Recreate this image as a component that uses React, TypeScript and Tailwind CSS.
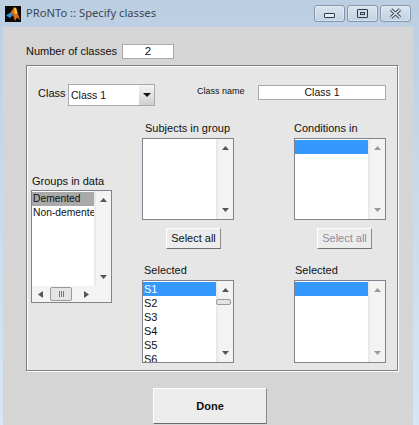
import React from "react";

const font = { fontFamily: '"Liberation Sans", Arial, sans-serif' };

function Up({ c = "#6f6f6f" }: { c?: string }) {
  return <svg width="7" height="4" viewBox="0 0 7 4" className="block"><path d="M3.5 0 L7 4 H0 Z" fill={c} /></svg>;
}
function Down({ c = "#6f6f6f" }: { c?: string }) {
  return <svg width="7" height="4" viewBox="0 0 7 4" className="block"><path d="M0 0 H7 L3.5 4 Z" fill={c} /></svg>;
}

function VScroll({ thumb, light }: { thumb?: boolean; light?: boolean }) {
  const c = light ? "#9a9a9a" : "#555555";
  return (
    <div className="w-[17px] shrink-0 bg-[#f3f3f3] border-l-2 border-l-[#e9e9e9] flex flex-col items-center justify-between py-[7px] relative">
      <Up c={c} />
      {thumb && <div className="absolute top-[18px] -left-[2px] w-[15px] h-[6px] rounded-[2px] border border-[#9a9a9a] bg-[#e4e4e4]" />}
      <Down c={c} />
    </div>
  );
}

function ListBox({ items = [], selected, h, w, thumb, light }: { items?: string[]; selected?: boolean; h: string; w: string; thumb?: boolean; light?: boolean }) {
  return (
    <div className={`flex border border-[#82828f] bg-white overflow-hidden ${h} ${w}`}>
      <div className="flex-1 overflow-hidden pt-px">
        {items.length === 0 && selected && <div className="h-[14px] bg-[#3399ff]" />}
        {items.map((t, i) => (
          <div key={t} className={`h-[14px] leading-[14px] pl-px text-[11px] whitespace-nowrap ${i === 0 && selected ? "bg-[#3399ff] text-white" : ""}`}>{t}</div>
        ))}
      </div>
      <VScroll thumb={thumb} light={light} />
    </div>
  );
}

function SelectAll({ disabled }: { disabled?: boolean }) {
  return (
    <button className={`block w-[55px] h-[21px] text-[11px] bg-[#ececec] border border-t-white border-l-white border-r-[#8a8a8a] border-b-[#707070] ${disabled ? "text-[#8c8c9c]" : "text-[#111]"}`}>
      Select all
    </button>
  );
}

function WinBtn({ children, w }: { children: React.ReactNode; w: string }) {
  return (
    <div className={`${w} h-[17px] rounded-[3px] border border-[#8496ad] bg-gradient-to-b from-[#d9e4ef] to-[#c2d2e2] flex items-center justify-center shadow-[inset_0_0_0_1px_rgba(255,255,255,0.35)]`}>
      {children}
    </div>
  );
}

export default function App() {
  return (
    <div style={font} className="w-[419px] h-[425px] overflow-hidden flex flex-col bg-gradient-to-b from-[#bccfe2] to-[#d6e6f6] text-[#111]">
      <div className="h-[27px] shrink-0 flex items-center pl-[5px] pr-[8px]">
        <svg width="16" height="16" viewBox="0 0 16 16" className="shrink-0">
          <rect width="16" height="16" fill="#0a0a0a" />
          <path d="M1 9.5 L5.5 6.5 L8 9 L5 12 Z" fill="#2f8fd8" />
          <path d="M5.5 6.5 L9 1.5 L11 2 L15 14 L12 11.5 L10 15 L8 9 Z" fill="#e06a18" />
          <path d="M9 1.5 L11 2 L12.5 7 L9.5 8 Z" fill="#f7c23e" />
        </svg>
        <span style={{ fontFamily: '"Noto Sans", sans-serif' }} className="ml-[5px] text-[11.2px] text-[#3c4654]">PRoNTo :: Specify classes</span>
        <div className="ml-auto flex gap-[2px]">
          <WinBtn w="w-[31px]"><div className="w-[11px] h-[5px] mt-[4px] rounded-[1px] border border-[#2d3848] bg-[#e6edf4]" /></WinBtn>
          <WinBtn w="w-[31px]"><div className="w-[11px] h-[9px] rounded-[1px] border border-[#2d3848] flex items-center justify-center"><div className="w-[5px] h-[3px] border border-[#2d3848]" /></div></WinBtn>
          <WinBtn w="w-[31px]">
            <svg width="13" height="11" viewBox="0 0 13 11">
              <path d="M2 1.5 L11 9.5 M11 1.5 L2 9.5" stroke="#3f4b5c" strokeWidth="3.4" />
              <path d="M2 1.5 L11 9.5 M11 1.5 L2 9.5" stroke="#e6edf4" strokeWidth="1.4" />
            </svg>
          </WinBtn>
        </div>
      </div>

      <div className="ml-[3px] mr-[6px] flex-1 bg-[#d5d5d5] flex flex-col">
        <div className="mt-[17px] ml-[23px] flex items-center h-[15px]">
          <span className="text-[11px] w-[96px] whitespace-nowrap">Number of classes</span>
          <div className="w-[52px] h-[15px] bg-white border border-[#a8a8b0] text-[11.5px] leading-[13px] text-center">2</div>
        </div>

        <div className="mt-[6px] ml-[23px] w-[372px] h-[306px] bg-[#e6e6e6] border border-[#808080] shadow-[inset_1px_1px_0_#ffffff,1px_1px_0_#ffffff] flex flex-col">
          <div className="mt-[18px] flex items-start h-[22px]">
            <span className="ml-[11px] mt-[1px] text-[11px] w-[30px]">Class</span>
            <div className="w-[87px] h-[22px] bg-white border border-[#a8a8b0] flex items-center">
              <span className="flex-1 pl-[2px] text-[10.5px] pt-[1px]">Class 1</span>
              <div className="w-[15px] h-[20px] bg-gradient-to-b from-[#f4f4f4] to-[#d0d0d0] flex items-center justify-center">
                <svg width="8" height="4" viewBox="0 0 8 4"><path d="M0 0 H8 L4 4 Z" fill="#111" /></svg>
              </div>
            </div>
            <span className="ml-[42px] mt-[1px] text-[9px] w-[61px] whitespace-nowrap">Class name</span>
            <div className="mt-[1px] w-[128px] h-[15px] bg-white border border-[#a8a8b0] text-[10.5px] leading-[13px] text-center">Class 1</div>
          </div>

          <div className="flex pl-[4px] flex-1">
            <div className="w-[111px] flex flex-col">
              <div className="mt-[68px] ml-px text-[11px] leading-[14px] h-[16px]">Groups in data</div>
              <div className="flex flex-col w-[81px] h-[113px] border border-[#82828f] bg-white overflow-hidden">
                <div className="flex flex-1 min-h-0">
                  <div className="flex-1 pt-px overflow-hidden">
                    <div className="h-[14px] leading-[14px] pl-px text-[10.3px] bg-[#a9a9a9]">Demented</div>
                    <div className="h-[14px] leading-[14px] pl-px text-[10.3px] whitespace-nowrap">Non-demented</div>
                  </div>
                  <VScroll />
                </div>
                <div className="h-[16px] shrink-0 bg-[#f3f3f3] flex items-center">
                  <svg width="5" height="7" viewBox="0 0 5 7" className="ml-[6px]"><path d="M5 0 V7 L0 3.5 Z" fill="#555" /></svg>
                  <div className="ml-[7px] w-[22px] h-[14px] rounded-[2px] border border-[#9a9a9a] bg-[#e4e4e4] flex items-center justify-center gap-px">
                    <i className="w-px h-[6px] bg-[#777]" /><i className="w-px h-[6px] bg-[#777]" /><i className="w-px h-[6px] bg-[#777]" />
                  </div>
                  <svg width="5" height="7" viewBox="0 0 5 7" className="ml-[12px]"><path d="M0 0 V7 L5 3.5 Z" fill="#555" /></svg>
                </div>
              </div>
            </div>

            <div className="w-[152px] flex flex-col">
              <div className="mt-[15px] ml-[3px] text-[11px] leading-[14px] h-[17px]">Subjects in group</div>
              <ListBox w="w-[92px]" h="h-[82px]" />
              <div className="mt-[8px] ml-[24px]"><SelectAll /></div>
              <div className="mt-[14px] ml-[2px] text-[11px] leading-[14px] h-[17px]">Selected</div>
              <ListBox w="w-[92px]" h="h-[83px]" items={["S1", "S2", "S3", "S4", "S5", "S6"]} selected thumb />
            </div>

            <div className="w-[92px] flex flex-col">
              <div className="mt-[15px] text-[11px] leading-[14px] h-[17px]">Conditions in</div>
              <ListBox w="w-[92px]" h="h-[82px]" selected light />
              <div className="mt-[8px] ml-[23px]"><SelectAll disabled /></div>
              <div className="mt-[14px] ml-[1px] text-[11px] leading-[14px] h-[17px]">Selected</div>
              <ListBox w="w-[92px]" h="h-[83px]" selected light />
            </div>
          </div>
        </div>

        <button className="mt-[17px] ml-[150px] w-[114px] h-[36px] bg-[#ececec] border border-t-white border-l-white border-r-[#8a8a8a] border-b-[#6a6a6a] text-[11px] font-bold">Done</button>
      </div>
    </div>
  );
}
